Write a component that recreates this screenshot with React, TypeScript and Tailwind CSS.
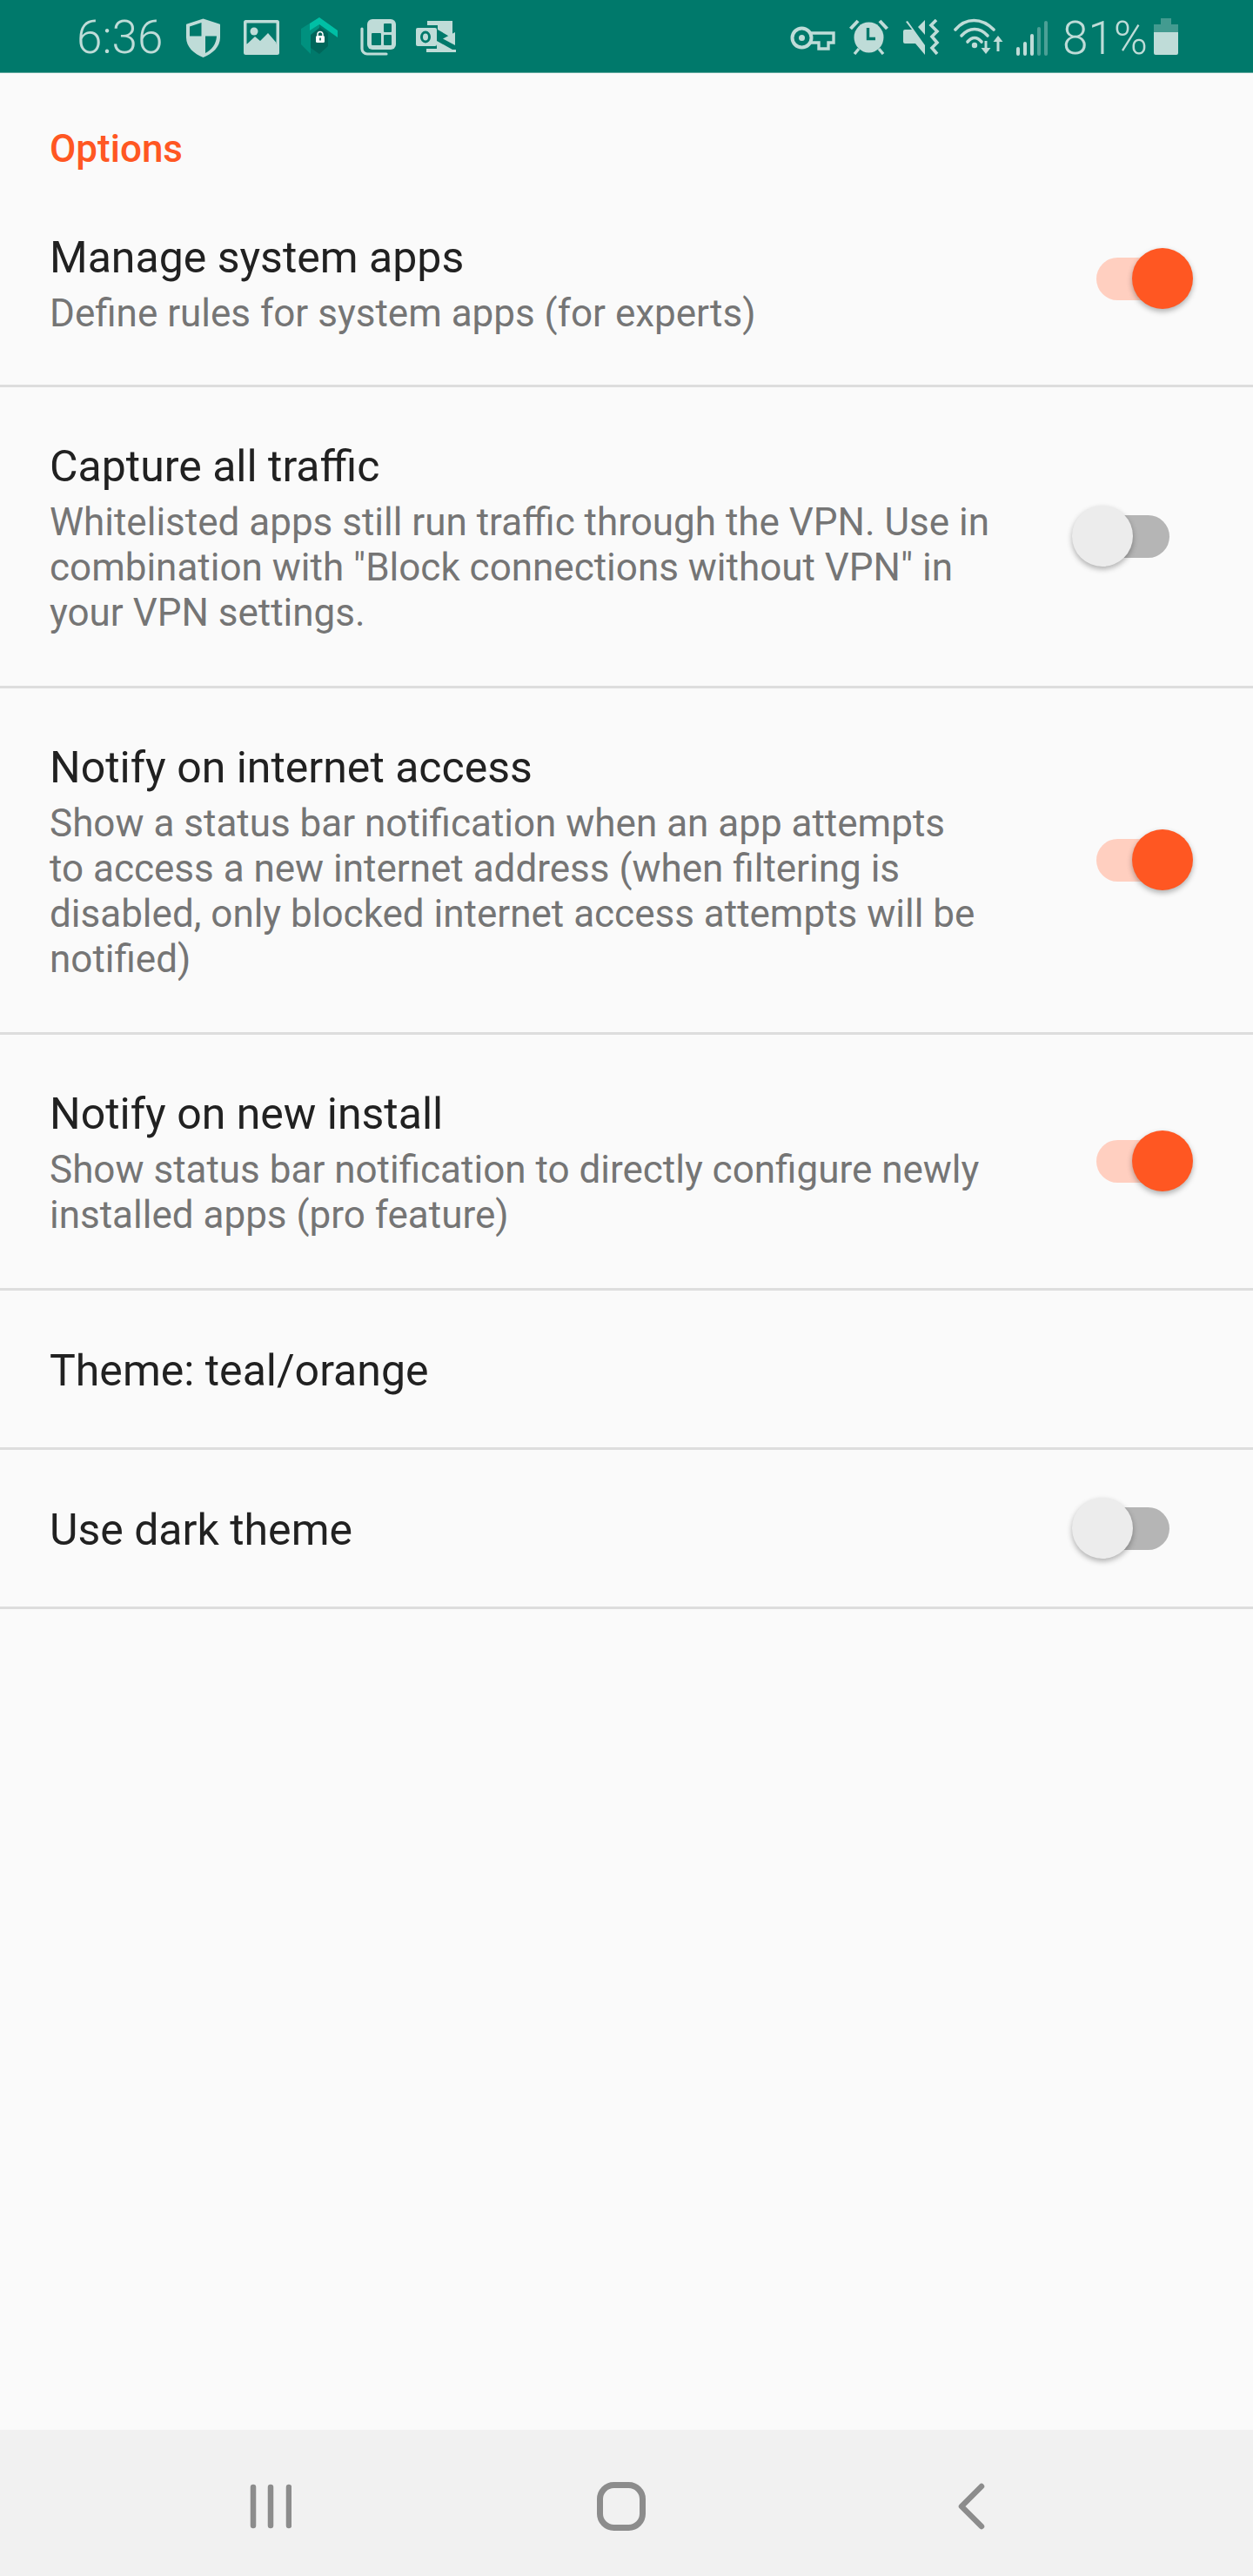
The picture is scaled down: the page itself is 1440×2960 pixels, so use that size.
import React from "react";

const C = "#BFDCD8";
const BG = "#00796B";

function Shield() {
  return (
    <svg width="39" height="45" viewBox="0 0 39 45" className="mt-[21px] ml-[27px]">
      <path d="M19.5 0.5 L38 6.5 a1 1 0 0 1 1 1 V22 C39 33 30 41 19.5 45 C9 41 0 33 0 22 V7.5 a1 1 0 0 1 1 -1 Z" fill={C} />
      <path d="M17.5 5 V20.5 H4 V9.5 Z" fill={BG} />
      <path d="M22 20.5 H35 C34.5 30 29 36.5 22 40 Z" fill={BG} />
    </svg>
  );
}

function ImageIcon() {
  return (
    <svg width="41" height="40" viewBox="0 0 41 40" className="mt-[23px] ml-[27px]">
      <rect x="0" y="0" width="41" height="40" rx="2.5" fill={C} />
      <rect x="3.5" y="3.5" width="34" height="24" fill={BG} />
      <circle cx="12" cy="13" r="4.5" fill={C} />
      <path d="M3.5 28 L13 19 L19 24 L28 15 L37.5 26 V33 H3.5 Z" fill={C} />
    </svg>
  );
}

function LockHex() {
  return (
    <svg width="43" height="42" viewBox="0 0 43 42" className="mt-[20px] ml-[25px]">
      <path d="M11 17 L21 11 L31 18 L31 33 L21 42 L11 35 Z" fill="#00665A" />
      <path d="M21 0 L0 13 V31 L11 42 V20 L21 12 Z" fill="#00917F" />
      <path d="M21 0 L42 15 V23 L21 8 L10 15 L10 7 Z" fill="#00BFA5" />
      <rect x="17" y="21" width="10" height="8" rx="1.5" fill="#FFFFFF" />
      <path d="M19 21 V19.5 a3 3 0 0 1 6 0 V21" stroke="#FFFFFF" strokeWidth="1.5" fill="none" />
      <rect x="21.2" y="23.5" width="1.6" height="3" fill="#00665A" />
    </svg>
  );
}

function Grid() {
  return (
    <svg width="41" height="42" viewBox="0 0 41 42" className="mt-[22px] ml-[25px]">
      <rect x="8" y="0" width="33" height="35" rx="6" fill={C} />
      <rect x="13" y="16" width="11" height="14" rx="1" fill={BG} />
      <rect x="27" y="18" width="9" height="12" rx="1" fill={BG} />
      <rect x="27" y="5" width="9" height="10" rx="1" fill={BG} />
      <path d="M2 11 V34 a6 6 0 0 0 6 6 H30" stroke={C} strokeWidth="3.2" fill="none" strokeLinecap="round" />
    </svg>
  );
}

function Outlook() {
  return (
    <svg width="46" height="36" viewBox="0 0 46 36" className="mt-[24px] ml-[23px]">
      <path d="M13 0 H42 V20 L25 10 V5 H13 Z" fill={C} />
      <rect x="0" y="8" width="24" height="21" rx="2" fill={C} />
      <ellipse cx="11" cy="18.5" rx="4.5" ry="5.5" fill="none" stroke={BG} strokeWidth="3" />
      <path d="M45 13 V28 L31 20.5 Z" fill={C} />
      <path d="M24 23 L42 33 H46 V36 H12 V32 H24 Z" fill={C} />
    </svg>
  );
}

function Key() {
  return (
    <svg width="52" height="28" viewBox="0 0 52 28" className="mt-[30px]">
      <circle cx="13.5" cy="13.5" r="11" fill="none" stroke={C} strokeWidth="4" />
      <circle cx="13.5" cy="13.5" r="3.5" fill={C} />
      <path d="M24 8 H50 V19 H44 V26 H33 V19 H24" fill="none" stroke={C} strokeWidth="3.4" strokeLinejoin="miter" />
    </svg>
  );
}

function Alarm() {
  return (
    <svg width="45" height="41" viewBox="0 0 45 41" className="mt-[22px] ml-[16px]">
      <ellipse cx="22.5" cy="21" rx="17" ry="17.5" fill={C} />
      <path d="M21.5 10 V22.5 H30" stroke={BG} strokeWidth="3.4" fill="none" />
      <path d="M1.5 11 L10 2" stroke={C} strokeWidth="4" />
      <path d="M43.5 11 L35 2" stroke={C} strokeWidth="4" />
      <path d="M6 40 L11 34" stroke={C} strokeWidth="3.4" />
      <path d="M39 40 L34 34" stroke={C} strokeWidth="3.4" />
    </svg>
  );
}

function MuteVib() {
  return (
    <svg width="43" height="41" viewBox="0 0 43 41" className="mt-[22px] ml-[17px]">
      <path d="M5 2 L25 30 V41 L14 28 H2 a2 2 0 0 1 -2 -2 V14 a2 2 0 0 1 2 -2 H10 L3 3 Z" fill={C} />
      <path d="M25 1 V18 L17 9 Z" fill={C} />
      <path d="M38 1 L32 7 L39 14 L33 20 L39 27 L33 33 L39 40" fill="none" stroke={C} strokeWidth="3.6" />
    </svg>
  );
}

function Wifi() {
  return (
    <svg width="57" height="41" viewBox="0 0 57 41" className="mt-[21px] ml-[15px]">
      <path d="M2 13 C14 -1 32 -1 46 13" fill="none" stroke={C} strokeWidth="3.6" strokeLinecap="round" />
      <path d="M9 20 C18 10 30 10 39 20" fill="none" stroke={C} strokeWidth="3.6" strokeLinecap="round" />
      <path d="M16 27 C21 21 27 21 32 27" fill="none" stroke={C} strokeWidth="3.6" strokeLinecap="round" />
      <circle cx="24" cy="31" r="3.2" fill={C} />
      <path d="M37 26 V38" stroke={C} strokeWidth="3" />
      <path d="M31.5 34 H42.5 L37 41 Z" fill={C} />
      <path d="M51 22 V38" stroke={C} strokeWidth="3" />
      <path d="M45.5 27 H56.5 L51 20 Z" fill={C} />
    </svg>
  );
}

function Signal() {
  return (
    <svg width="37" height="40" viewBox="0 0 37 40" className="mt-[24px] ml-[15px]">
      <rect x="0" y="30" width="4" height="10" rx="2" fill={C} />
      <rect x="8" y="24" width="4" height="16" rx="2" fill={C} />
      <rect x="16" y="15" width="4" height="25" rx="2" fill={C} />
      <rect x="24" y="7" width="4" height="33" rx="2" fill={C} opacity="0.4" />
      <rect x="32" y="0" width="4" height="40" rx="2" fill={C} opacity="0.4" />
    </svg>
  );
}

function Battery() {
  return (
    <svg width="28" height="42" viewBox="0 0 28 42" className="mt-[21px] ml-[7px]">
      <path d="M8 0 H20 V7 H28 V16 H0 V7 H8 Z" fill={C} opacity="0.35" />
      <path d="M0 16 H28 V40 a2 2 0 0 1 -2 2 H2 a2 2 0 0 1 -2 -2 Z" fill={C} />
    </svg>
  );
}

function Toggle({ on }: { on: boolean }) {
  return (
    <div className={on ? "relative w-[84px] h-[49px] rounded-full bg-[#FFCFC0] mr-[96px]" : "relative w-[84px] h-[49px] rounded-full bg-[#B5B5B5] mr-[96px]"}>
      <div
        className={
          on
            ? "absolute left-[41px] top-[-11px] w-[70px] h-[70px] rounded-full bg-[#FF5722] shadow-[0_3px_6px_rgba(0,0,0,0.3)]"
            : "absolute left-[-28px] top-[-11px] w-[70px] h-[70px] rounded-full bg-[#ECECEC] shadow-[0_3px_6px_rgba(0,0,0,0.3)]"
        }
      />
    </div>
  );
}

function Row({ title, lines, on, h, pad }: { title: string; lines?: string[]; on?: boolean; h: string; pad: string }) {
  return (
    <div className={`flex items-center justify-between pl-[57px] border-b-[3px] border-[#DDDDDD] ${h}`}>
      <div className={pad}>
        <div className="text-[50px] leading-[60px] text-[#212121]">{title}</div>
        {lines && (
          <div className="text-[44px] leading-[52px] text-[#757575] mt-[8px]">
            {lines.map((l) => (
              <div key={l} className="whitespace-nowrap">{l}</div>
            ))}
          </div>
        )}
      </div>
      {on !== undefined && <Toggle on={on} />}
    </div>
  );
}

export default function App() {
  return (
    <div className="w-[1440px] h-[2960px] flex flex-col bg-[#FAFAFA] font-['Roboto',sans-serif]">
      <div className="h-[84px] shrink-0 flex bg-[#00796B] border-b border-[#5FA89E]">
        <div className="flex flex-1 pl-[88px]">
          <span className="text-[53px] leading-[86px] text-[#BFDCD8] font-light">6:36</span>
          <Shield />
          <ImageIcon />
          <LockHex />
          <Grid />
          <Outlook />
        </div>
        <div className="flex pr-[86px]">
          <Key />
          <Alarm />
          <MuteVib />
          <Wifi />
          <Signal />
          <span className="text-[53px] leading-[88px] text-[#BFDCD8] font-light ml-[16px]">81%</span>
          <Battery />
        </div>
      </div>
      <div className="flex-1 flex flex-col">
        <div className="h-[115px] shrink-0 pl-[57px] pt-[60px] text-[44px] leading-[54px] font-medium text-[#FF5722]">Options</div>
        <Row h="h-[246px]" pad="pt-[10px]" title="Manage system apps" lines={["Define rules for system apps (for experts)"]} on={true} />
        <Row h="h-[346px]" pad="pt-[2px]" title="Capture all traffic" lines={["Whitelisted apps still run traffic through the VPN. Use in", 'combination with "Block connections without VPN" in', "your VPN settings."]} on={false} />
        <Row h="h-[398px]" pad="pt-[2px]" title="Notify on internet access" lines={["Show a status bar notification when an app attempts", "to access a new internet address (when filtering is", "disabled, only blocked internet access attempts will be", "notified)"]} on={true} />
        <Row h="h-[294px]" pad="pt-[2px]" title="Notify on new install" lines={["Show status bar notification to directly configure newly", "installed apps (pro feature)"]} on={true} />
        <Row h="h-[183px]" pad="pt-[3px]" title="Theme: teal/orange" />
        <Row h="h-[183px]" pad="pt-[3px]" title="Use dark theme" on={false} />
      </div>
      <div className="h-[168px] shrink-0 bg-[#F1F1F1] flex items-start pt-[60px]">
        <svg width="48" height="56" viewBox="0 0 48 56" className="ml-[287px]">
          <path d="M4 6 V50 M24 6 V50 M45 6 V50" stroke="#8C8C8C" strokeWidth="6.5" strokeLinecap="round" />
        </svg>
        <svg width="56" height="56" viewBox="0 0 56 56" className="ml-[351px]">
          <rect x="3.5" y="3.5" width="49" height="49" rx="16" fill="none" stroke="#8C8C8C" strokeWidth="7" />
        </svg>
        <svg width="32" height="56" viewBox="0 0 32 56" className="ml-[358px]">
          <path d="M28 5 L5 28 L28 51" fill="none" stroke="#8C8C8C" strokeWidth="6.5" strokeLinecap="round" strokeLinejoin="round" />
        </svg>
      </div>
    </div>
  );
}
